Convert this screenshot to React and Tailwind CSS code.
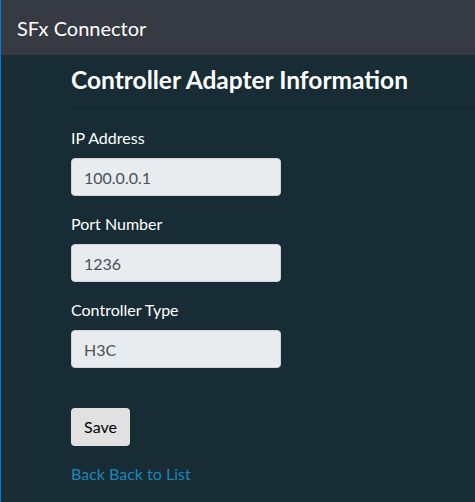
export default function App() {
  const fields = [
    { label: "IP Address", value: "100.0.0.1" },
    { label: "Port Number", value: "1236" },
    { label: "Controller Type", value: "H3C" },
  ];

  return (
    <div className="min-h-[502px] border-l border-[#0a78d7] bg-[#172c35] font-['Lato',sans-serif] text-white">
      <header className="flex h-[55px] items-center bg-[#363a42] px-4">
        <span className="text-[20px]">SFx Connector</span>
      </header>

      <main className="pl-[70px]">
        <h1 className="border-b border-[#11242b] pt-[7px] pb-[10px] text-[24.5px] font-bold leading-[36px]">
          Controller Adapter Information
        </h1>

        <form className="mt-[17px] w-[210px]">
          {fields.map((field) => (
            <div key={field.label} className="mb-4">
              <label className="mb-2 block text-[16px] leading-6">{field.label}</label>
              <input
                readOnly
                value={field.value}
                className="block h-[38px] w-full rounded border border-[#ced4da] bg-[#e9ecef] px-3 text-[16px] text-[#495057]"
              />
            </div>
          ))}

          <button
            type="button"
            className="mt-[24px] h-[38px] w-[59px] rounded bg-[#e1e1e1] text-[16px] text-black"
          >
            Save
          </button>
        </form>

        <a href="#" className="mt-4 block leading-6 text-[#1b87b8]">
          Back Back to List
        </a>
      </main>
    </div>
  );
}
